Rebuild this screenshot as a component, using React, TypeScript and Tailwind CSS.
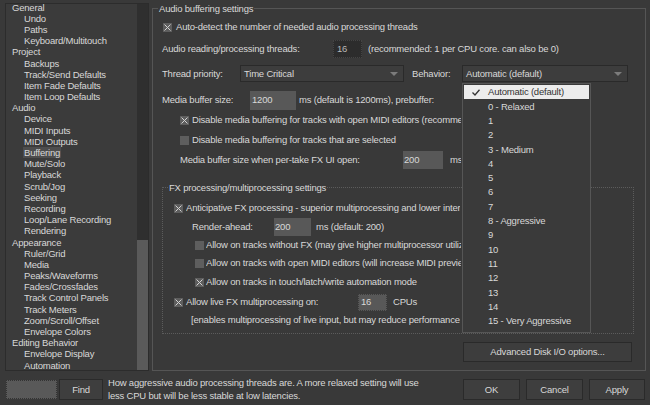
import React from "react";

const tree: [string, number][] = [
  ["General", 0], ["Undo", 1], ["Paths", 1], ["Keyboard/Multitouch", 1],
  ["Project", 0], ["Backups", 1], ["Track/Send Defaults", 1], ["Item Fade Defaults", 1], ["Item Loop Defaults", 1],
  ["Audio", 0], ["Device", 1], ["MIDI Inputs", 1], ["MIDI Outputs", 1], ["Buffering", 1], ["Mute/Solo", 1],
  ["Playback", 1], ["Scrub/Jog", 1], ["Seeking", 1], ["Recording", 1], ["Loop/Lane Recording", 1], ["Rendering", 1],
  ["Appearance", 0], ["Ruler/Grid", 1], ["Media", 1], ["Peaks/Waveforms", 1], ["Fades/Crossfades", 1],
  ["Track Control Panels", 1], ["Track Meters", 1], ["Zoom/Scroll/Offset", 1], ["Envelope Colors", 1],
  ["Editing Behavior", 0], ["Envelope Display", 1], ["Automation", 1],
];

const behaviors = [
  "Automatic (default)", "0 - Relaxed", "1", "2", "3 - Medium", "4", "5", "6", "7",
  "8 - Aggressive", "9", "10", "11", "12", "13", "14", "15 - Very Aggressive",
];

function Check({ on }: { on?: boolean }) {
  return (
    <svg width="9" height="9" viewBox="0 0 9 9" className="shrink-0">
      <rect x="0" y="0" width="9" height="9" fill="#5e5e5e" />
      {on && <path d="M1.5 1.5L7.5 7.5M7.5 1.5L1.5 7.5" stroke="#d2d2d2" strokeWidth="1" />}
    </svg>
  );
}

function Select({ className, value }: { className: string; value: string }) {
  return (
    <div className={`${className} h-[17px] bg-[#3d3d3d] border border-[#2a2a2a] flex items-center justify-between pl-[3px] pr-[5px]`}>
      <span>{value}</span>
      <svg width="8" height="4" viewBox="0 0 8 4">
        <path d="M0 0H8L4 4Z" fill="#7c7c7c" />
      </svg>
    </div>
  );
}

export default function App() {
  return (
    <div className="w-[650px] h-[405px] bg-[#393939] text-[#d8d8d8] font-['Liberation_Sans',Arial,sans-serif] text-[9.5px] tracking-[-0.2px] leading-none relative overflow-hidden">
      <div className="flex items-start h-[372px] pt-[3px] pl-[5px]">
        {/* tree */}
        <div className="w-[144px] h-[368px] bg-[#3b3b3b] border border-[#2c2c2c] flex overflow-hidden">
          <div className="flex-1 overflow-hidden">
            <div className="mt-[-2.4px]">
              {tree.map(([t, lvl]) => (
                <div key={t} className={`h-[11.2px] leading-[11.2px] whitespace-nowrap ${lvl ? "pl-[18px]" : "pl-[6px]"}`}>
                  <span className={t === "Buffering" ? "bg-[#4d4d4d] px-[1px] -mx-[1px]" : ""}>{t}</span>
                </div>
              ))}
            </div>
          </div>
          <div className="w-[11px] flex flex-col bg-[#2f2f2f]">
            <div className="h-[236px]" />
            <div className="flex-1 bg-[#5a5a5a]" />
          </div>
        </div>

        {/* settings */}
        <div className="relative ml-[3px] mt-[5px] w-[494px] h-[363px] border border-[#555] flex flex-col pl-[9px]">
          <span className="absolute -top-[6px] left-[5px] px-[1px] bg-[#393939] leading-[11px]">Audio buffering settings</span>

          <div className="mt-[10px] h-[16px] flex items-center ml-[1px]">
            <Check on />
            <span className="ml-[4px]">Auto-detect the number of needed audio processing threads</span>
          </div>

          <div className="mt-[4px] h-[20px] flex items-center">
            <span className="w-[171px]">Audio reading/processing threads:</span>
            <div className="w-[29px] h-[18px] bg-[#2c2c2c] border border-dotted border-[#444] flex items-center pl-[3px] text-[#b8b8b8]">16</div>
            <span className="ml-[6px]">(recommended: 1 per CPU core. can also be 0)</span>
          </div>

          <div className="mt-[6px] h-[17px] flex items-center">
            <span className="w-[78px]">Thread priority:</span>
            <Select className="w-[164px]" value="Time Critical" />
            <span className="ml-[8px] w-[50px]">Behavior:</span>
            <Select className="w-[166px]" value="Automatic (default)" />
          </div>

          <div className="mt-[8px] h-[20px] flex items-center">
            <span className="w-[88px]">Media buffer size:</span>
            <div className="w-[46px] h-[19px] bg-[#585858] flex items-center pl-[2px]">1200</div>
            <span className="ml-[3px]">ms (default is 1200ms), prebuffer:</span>
          </div>

          <div className="mt-[2px] h-[16px] flex items-center ml-[18px]">
            <Check on />
            <span className="ml-[3px] w-[269px] overflow-hidden whitespace-nowrap">Disable media buffering for tracks with open MIDI editors (recommended)</span>
          </div>

          <div className="mt-[4px] h-[16px] flex items-center ml-[18px]">
            <Check />
            <span className="ml-[3px]">Disable media buffering for tracks that are selected</span>
          </div>

          <div className="mt-[2px] h-[20px] flex items-center ml-[18px]">
            <span className="w-[223px]">Media buffer size when per-take FX UI open:</span>
            <div className="w-[40px] h-[18px] bg-[#585858] flex items-center pl-[1px]">200</div>
            <span className="ml-[7px] w-[11px] overflow-hidden">ms</span>
          </div>

          {/* FX group */}
          <div className="relative mt-[17px] w-[472px] h-[147px] border border-dotted border-[#5c5c5c] flex flex-col">
            <span className="absolute -top-[6px] left-[5px] px-[1px] bg-[#393939] leading-[11px]">FX processing/multiprocessing settings</span>

            <div className="mt-[12px] h-[16px] flex items-center ml-[11px]">
              <Check on />
              <span className="ml-[3px] w-[274px] overflow-hidden whitespace-nowrap">Anticipative FX processing - superior multiprocessing and lower interface latency</span>
            </div>

            <div className="mt-[2px] h-[18px] flex items-center ml-[29px]">
              <span className="w-[82px]">Render-ahead:</span>
              <div className="w-[37px] h-[18px] bg-[#585858] flex items-center pl-[1px]">200</div>
              <span className="ml-[5px]">ms (default: 200)</span>
            </div>

            <div className="mt-[1px] h-[16px] flex items-center ml-[32px]">
              <Check />
              <span className="ml-[2px] w-[255px] overflow-hidden whitespace-nowrap">Allow on tracks without FX (may give higher multiprocessor utilization)</span>
            </div>

            <div className="mt-[2px] h-[16px] flex items-center ml-[32px]">
              <Check />
              <span className="ml-[2px] w-[255px] overflow-hidden whitespace-nowrap">Allow on tracks with open MIDI editors (will increase MIDI preview latency)</span>
            </div>

            <div className="mt-[3px] h-[16px] flex items-center ml-[32px]">
              <Check on />
              <span className="ml-[2px]">Allow on tracks in touch/latch/write automation mode</span>
            </div>

            <div className="mt-[3px] h-[18px] flex items-center ml-[11px]">
              <Check on />
              <span className="ml-[3px] w-[172px]">Allow live FX multiprocessing on:</span>
              <div className="w-[29px] h-[17px] bg-[#585858] border border-dotted border-[#3a3a3a] flex items-center pl-[2px]">16</div>
              <span className="ml-[6px]">CPUs</span>
            </div>

            <div className="mt-[1px] h-[16px] flex items-center ml-[28px]">
              <span className="w-[269px] overflow-hidden whitespace-nowrap">[enables multiprocessing of live input, but may reduce performance with some plug-ins]</span>
            </div>
          </div>

          <button className="mt-[8px] ml-[301px] w-[169px] h-[20px] bg-[#3d3d3d] border border-[#2a2a2a] text-[#d8d8d8] flex items-center justify-center">
            Advanced Disk I/O options...
          </button>
        </div>
      </div>

      {/* bottom bar */}
      <div className="flex items-start h-[33px] pl-[6px] pr-[5px]">
        <div className="mt-[8px] w-[51px] h-[19px] bg-[#595959] border border-dotted border-[#333]" />
        <button className="mt-[7px] ml-[2px] w-[44px] h-[21px] bg-[#3e3e3e] border border-[#2a2a2a] text-[#d8d8d8] flex items-center justify-center">Find</button>
        <div className="ml-[5px] mt-[4px] flex-1 leading-[13px]">
          <div>How aggressive audio processing threads are. A more relaxed setting will use</div>
          <div>less CPU but will be less stable at low latencies.</div>
        </div>
        <div className="flex gap-[6px] mt-[7px]">
          <button className="w-[57px] h-[21px] bg-[#3e3e3e] border border-[#2a2a2a] text-[#d8d8d8]">OK</button>
          <button className="w-[57px] h-[21px] bg-[#3e3e3e] border border-[#2a2a2a] text-[#d8d8d8]">Cancel</button>
          <button className="w-[56px] h-[21px] bg-[#3e3e3e] border border-[#2a2a2a] text-[#d8d8d8]">Apply</button>
        </div>
      </div>

      {/* behavior dropdown popup */}
      <div className="absolute left-[462px] top-[83px] w-[129px] h-[250px] bg-[#3a3a3a] border border-[#565656] pt-[1px] px-[1px]">
        {behaviors.map((b, i) => (
          <div key={b} className={`h-[14.3px] flex items-center relative pl-[24px] ${i === 0 ? "bg-[#ececec] text-[#333]" : ""}`}>
            {i === 0 && (
              <svg width="8" height="7" viewBox="0 0 8 7" className="absolute left-[8px] top-[4px]">
                <path d="M0.5 3.5L3 6L7.5 0.8" fill="none" stroke="#333" strokeWidth="1.3" />
              </svg>
            )}
            {b}
          </div>
        ))}
      </div>
    </div>
  );
}
